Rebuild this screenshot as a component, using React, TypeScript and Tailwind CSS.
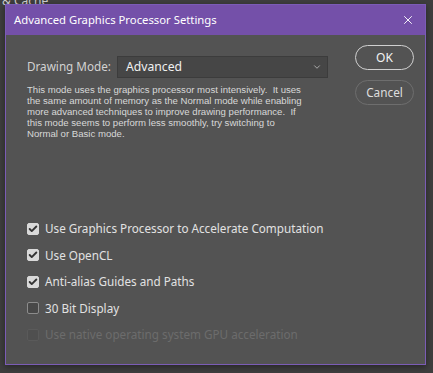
import { ChevronDown, Check, X } from "lucide-react";

type Item = {
  label: string;
  checked: boolean;
  disabled?: boolean;
};

const items: Array<Item> = [
  { label: "Use Graphics Processor to Accelerate Computation", checked: true },
  { label: "Use OpenCL", checked: true },
  { label: "Anti-alias Guides and Paths", checked: true },
  { label: "30 Bit Display", checked: false },
  { label: "Use native operating system GPU acceleration", checked: false, disabled: true },
];

const description = [
  "This mode uses the graphics processor most intensively.\u00a0 It uses",
  "the same amount of memory as the Normal mode while enabling",
  "more advanced techniques to improve drawing performance.\u00a0 If",
  "this mode seems to perform less smoothly, try switching to",
  "Normal or Basic mode.",
];

const CheckRow: React.FC<{ item: Item }> = ({ item }) => {
  const box = item.checked
    ? "bg-[#d9d9d9] border-[#d9d9d9]"
    : item.disabled
    ? "bg-[#4f4f4f] border-[#5a5a5a]"
    : "bg-[#484848] border-[#8c8c8c]";
  return (
    <div className="flex items-center h-[26.5px]">
      <div
        className={`w-[12px] h-[12px] rounded-[2px] border flex items-center justify-center ${box}`}
      >
        {item.checked && <Check className="w-[10px] h-[10px] text-[#333333]" strokeWidth={4.5} />}
      </div>
      <span
        className={`ml-[6px] whitespace-nowrap text-[11.7px] ${
          item.disabled ? "text-[#6c6c6c]" : "text-[#e2e2e2]"
        }`}
      >
        {item.label}
      </span>
    </div>
  );
};

export default function App() {
  return (
    <div
      className="w-[433px] h-[373px] bg-[#3e3e3e] relative overflow-hidden"
      style={{ fontFamily: '"Noto Sans", "Open Sans", sans-serif' }}
    >
      <span className="absolute left-[2px] top-[-8px] text-[12px] text-[#cfcfcf]">& Cache</span>
      <div className="absolute left-[5px] top-[4px] w-[421px] h-[361px] border border-[#7b5cb6] bg-[#535353] flex flex-col shadow-[0_2px_6px_rgba(0,0,0,0.4)]">
        <div className="h-[30px] bg-[#7450a9] flex items-center justify-between pl-[8px] pr-[10px] shrink-0">
          <span className="text-[11.3px] text-white">Advanced Graphics Processor Settings</span>
          <X className="w-[14px] h-[14px] text-white" strokeWidth={1.6} />
        </div>
        <div className="flex flex-1">
          <div className="flex-1 pl-[21px] pt-[21px]">
            <div className="flex items-center h-[22px]">
              <span className="text-[11.7px] text-[#d2d2d2] w-[90px] whitespace-nowrap">
                Drawing Mode:
              </span>
              <div className="w-[211px] h-[22px] bg-[#464646] border border-[#3c3c3c] flex items-center justify-between pl-[8px] pr-[5px]">
                <span className="text-[12.2px] text-[#f0f0f0]">Advanced</span>
                <ChevronDown className="w-[10px] h-[10px] text-[#bdbdbd]" strokeWidth={2} />
              </div>
            </div>
            <div
              className="mt-[7px] text-[9.6px] leading-[10.9px] text-[#d8d8d8]"
              style={{ fontFamily: '"Liberation Sans", Arial, sans-serif' }}
            >
              {description.map((line) => (
                <div key={line} className="whitespace-nowrap">
                  {line}
                </div>
              ))}
            </div>
            <div className="mt-[76px] flex flex-col">
              {items.map((item) => (
                <CheckRow key={item.label} item={item} />
              ))}
            </div>
          </div>
          <div className="w-[71px] pr-[11px] pt-[10px] flex flex-col items-end gap-[10px]">
            <button className="w-[59px] h-[25px] rounded-full border-[1.5px] border-[#d0d0d0] text-[12px] text-[#f2f2f2]">
              OK
            </button>
            <button className="w-[59px] h-[25px] rounded-full border border-[#6e6e6e] text-[11.8px] text-[#dedede]">
              Cancel
            </button>
          </div>
        </div>
      </div>
    </div>
  );
}
